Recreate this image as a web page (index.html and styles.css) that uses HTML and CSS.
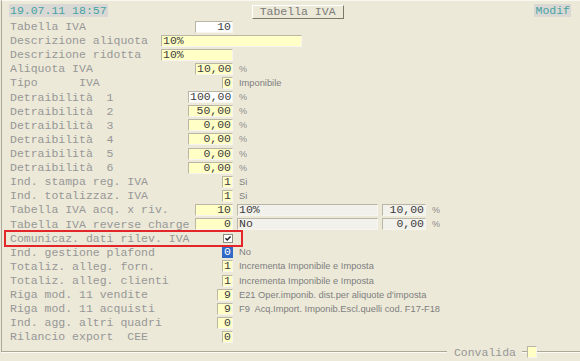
FILE: index.html
```html
<!DOCTYPE html>
<html lang="it">

<head>
    <meta charset="UTF-8">
    <title>Tabella IVA</title>
    <link rel="stylesheet" href="styles.css">
</head>

<body>

    <div class="panel">
        <div class="top">
            <span class="stamp">19.07.11 18:57</span>
            <span class="title-btn">Tabella IVA</span>
            <span class="stamp mode">Modif</span>
        </div>

        <div class="row">
            <span class="lbl">Tabella IVA</span>
            <span class="cell"><span class="f w5 white">10</span></span>
        </div>
        <div class="row">
            <span class="lbl">Descrizione aliquota</span>
            <span class="f desc">10%</span>
        </div>
        <div class="row">
            <span class="lbl">Descrizione ridotta</span>
            <span class="f desc short">10%</span>
        </div>
        <div class="row">
            <span class="lbl">Aliquota IVA</span>
            <span class="cell"><span class="f w5">10,00</span></span>
            <span class="pct">%</span>
        </div>
        <div class="row">
            <span class="lbl">Tipo&nbsp;&nbsp;&nbsp;&nbsp;&nbsp;&nbsp;IVA</span>
            <span class="cell"><span class="f w1">0</span></span>
            <span class="note">Imponibile</span>
        </div>
        <div class="row">
            <span class="lbl">Detraibilità&nbsp;&nbsp;1</span>
            <span class="cell"><span class="f w6 white">100,00</span></span>
            <span class="pct">%</span>
        </div>
        <div class="row">
            <span class="lbl">Detraibilità&nbsp;&nbsp;2</span>
            <span class="cell"><span class="f w6">50,00</span></span>
            <span class="pct">%</span>
        </div>
        <div class="row">
            <span class="lbl">Detraibilità&nbsp;&nbsp;3</span>
            <span class="cell"><span class="f w6">0,00</span></span>
            <span class="pct">%</span>
        </div>
        <div class="row">
            <span class="lbl">Detraibilità&nbsp;&nbsp;4</span>
            <span class="cell"><span class="f w6">0,00</span></span>
            <span class="pct">%</span>
        </div>
        <div class="row">
            <span class="lbl">Detraibilità&nbsp;&nbsp;5</span>
            <span class="cell"><span class="f w6">0,00</span></span>
            <span class="pct">%</span>
        </div>
        <div class="row">
            <span class="lbl">Detraibilità&nbsp;&nbsp;6</span>
            <span class="cell"><span class="f w6">0,00</span></span>
            <span class="pct">%</span>
        </div>
        <div class="row">
            <span class="lbl">Ind. stampa reg. IVA</span>
            <span class="cell"><span class="f w1">1</span></span>
            <span class="note">Si</span>
        </div>
        <div class="row">
            <span class="lbl">Ind. totalizzaz. IVA</span>
            <span class="cell"><span class="f w1">1</span></span>
            <span class="note">Si</span>
        </div>
        <div class="row">
            <span class="lbl">Tabella IVA acq. x riv.</span>
            <span class="cell"><span class="f w5">10</span></span>
            <span class="f grey gdesc">10%</span>
            <span class="f grey gval">10,00</span>
            <span class="pct">%</span>
        </div>
        <div class="row">
            <span class="lbl">Tabella IVA reverse charge</span>
            <span class="cell"><span class="f w5">0</span></span>
            <span class="f grey gdesc">No</span>
            <span class="f grey gval">0,00</span>
            <span class="pct">%</span>
        </div>
        <div class="row">
            <span class="marked">
                <span class="lbl">Comunicaz. dati rilev. IVA</span>
                <span class="cell">
                    <svg class="check" width="10" height="9" viewBox="0 0 10 9">
                        <rect x="0.5" y="0.5" width="9" height="8" fill="#fff" stroke="#8f8d80"/>
                        <path d="M2.5 4.2 L4.2 6 L7.6 2.4" fill="none" stroke="#222" stroke-width="1.5"/>
                    </svg>
                </span>
            </span>
        </div>
        <div class="row">
            <span class="lbl">Ind. gestione plafond</span>
            <span class="cell"><span class="f w1 sel">0</span></span>
            <span class="note">No</span>
        </div>
        <div class="row">
            <span class="lbl">Totaliz. alleg. forn.</span>
            <span class="cell"><span class="f w1">1</span></span>
            <span class="note">Incrementa Imponibile e Imposta</span>
        </div>
        <div class="row">
            <span class="lbl">Totaliz. alleg. clienti</span>
            <span class="cell"><span class="f w1">1</span></span>
            <span class="note">Incrementa Imponibile e Imposta</span>
        </div>
        <div class="row">
            <span class="lbl">Riga mod. 11 vendite</span>
            <span class="cell"><span class="f w2">9</span></span>
            <span class="note">E21 Oper.imponib. dist.per aliquote d'imposta</span>
        </div>
        <div class="row">
            <span class="lbl">Riga mod. 11 acquisti</span>
            <span class="cell"><span class="f w2">9</span></span>
            <span class="note">F9&nbsp; Acq.Import. Imponib.Escl.quelli cod. F17-F18</span>
        </div>
        <div class="row">
            <span class="lbl">Ind. agg. altri quadri</span>
            <span class="cell"><span class="f w2">0</span></span>
        </div>
        <div class="row">
            <span class="lbl">Rilancio export&nbsp;&nbsp;CEE</span>
            <span class="cell"><span class="f w1">0</span></span>
        </div>
    </div>

    <div class="footer">
        <span class="rule"></span>
        <span class="confirm">Convalida</span>
        <span class="rule tick"></span>
        <span class="f box"></span>
        <span class="rule end"></span>
    </div>

</body>

</html>
```

FILE: styles.css
```css
body {
    margin: 0;
    background: #ece9d8;
    font-family: "Liberation Mono", "DejaVu Sans Mono", monospace;
    font-size: 11.5px;
    color: #979797;
}

.panel {
    margin-left: 1px;
    height: 352px;
    border-left: 1px solid #aca899;
    border-top: 1px solid #f8f7f0;
    box-sizing: border-box;
}

.top {
    display: flex;
    align-items: center;
    height: 18.5px;
}

.stamp {
    margin-left: 7px;
    padding: 0 1px;
    height: 13px;
    line-height: 13px;
    background: #d9d8d4;
    color: #45a3a3;
}

.mode {
    margin-left: auto;
    margin-right: 9px;
}

.title-btn {
    margin-left: 144px;
    margin-top: 4px;
    height: 14px;
    line-height: 12px;
    padding: 0 7px;
    box-sizing: border-box;
    border: 1px solid;
    border-color: #ffffff #7b7868 #7b7868 #ffffff;
    color: #7a7a7a;
}

.row {
    display: flex;
    align-items: center;
    height: 14.11px;
}

.lbl {
    width: 150px;
    padding-left: 8px;
    white-space: nowrap;
    flex-shrink: 0;
}

.cell {
    width: 73px;
    display: flex;
    justify-content: flex-end;
    align-items: center;
    flex-shrink: 0;
}

.f {
    display: inline-block;
    box-sizing: border-box;
    height: 12px;
    line-height: 10px;
    padding: 0 1px;
    border: 1px solid;
    border-color: #b9b6a6 #f6f5ee #f6f5ee #b9b6a6;
    background: #ffffc6;
    color: #3c3c3c;
    text-align: right;
    white-space: pre;
}

.white {
    background: #ffffff;
}

.w1 { width: 11px; }
.w2 { width: 16px; }
.w5 { width: 38px; }
.w6 { width: 45px; }

.desc {
    margin-left: 1px;
    width: 141px;
    text-align: left;
}

.short {
    width: 72px;
}

.grey {
    background: #f2f1ec;
}

.gdesc {
    margin-left: 4px;
    width: 141px;
    text-align: left;
}

.gval {
    margin-left: 4px;
    width: 44px;
}

.sel {
    background: #3169c6;
    color: #ffffff;
    border-color: #3169c6;
}

.pct {
    margin-left: 6px;
    font-family: "Liberation Sans", Arial, sans-serif;
    font-size: 9px;
    color: #8c8c8c;
}

.note {
    margin-left: 6px;
    font-family: "Liberation Sans", Arial, sans-serif;
    font-size: 9.3px;
    color: #7e7e7e;
    white-space: pre;
}

.marked {
    position: relative;
    display: flex;
    align-items: center;
}

.marked::after {
    content: "";
    position: absolute;
    left: 2px;
    right: -10px;
    top: -2px;
    bottom: -2px;
    border: 2px solid #e2262a;
}

.check {
    display: block;
}

.footer {
    display: flex;
    align-items: center;
    height: 14px;
    margin-top: -7px;
}

.rule {
    flex: 1;
    height: 1px;
    background: #aca899;
    border-bottom: 1px solid #fbfaf4;
    margin-left: 1px;
}

.confirm {
    margin: 0 6px 0 7px;
}

.tick {
    flex: none;
    width: 5px;
    margin-left: 0;
}

.box {
    width: 10px;
    height: 12px;
    padding: 0;
}

.end {
    flex: none;
    width: 43px;
    margin-left: 0;
}
```
